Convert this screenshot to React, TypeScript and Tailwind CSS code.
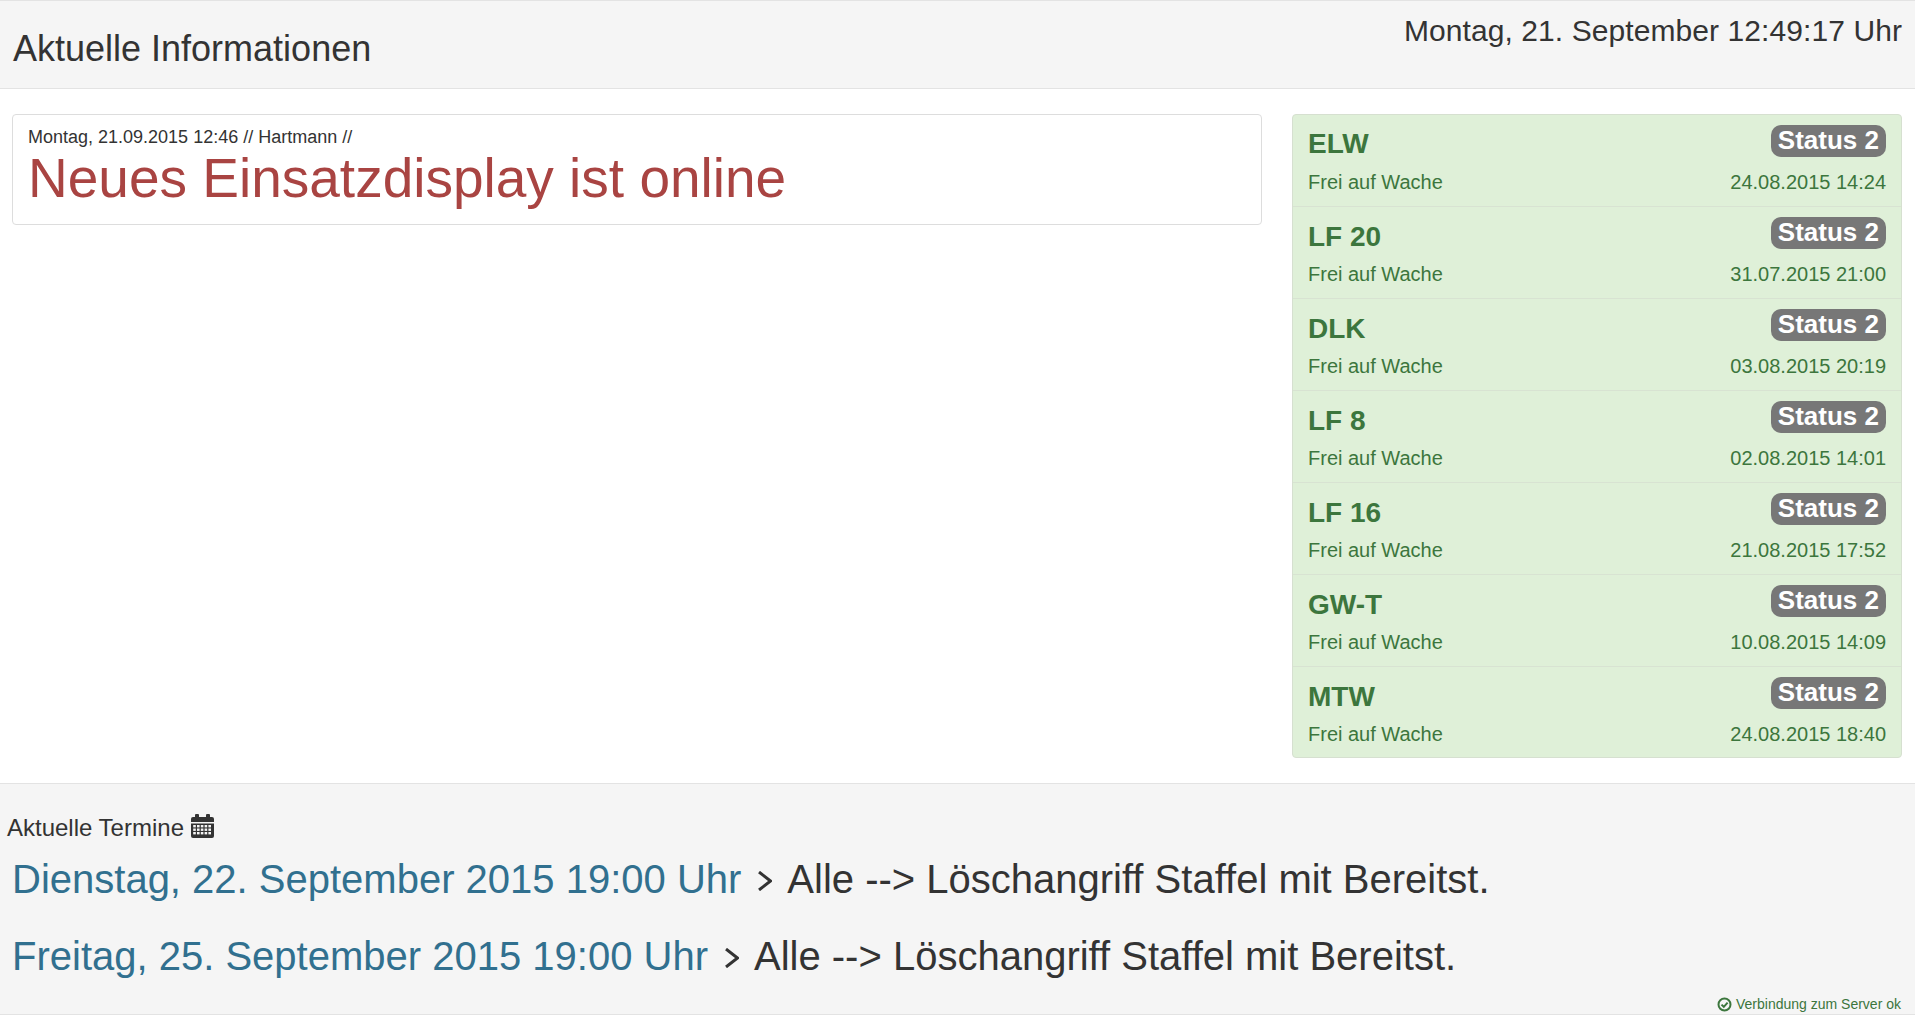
import React from "react";

const vehicles = [
  { name: "ELW", date: "24.08.2015 14:24" },
  { name: "LF 20", date: "31.07.2015 21:00" },
  { name: "DLK", date: "03.08.2015 20:19" },
  { name: "LF 8", date: "02.08.2015 14:01" },
  { name: "LF 16", date: "21.08.2015 17:52" },
  { name: "GW-T", date: "10.08.2015 14:09" },
  { name: "MTW", date: "24.08.2015 18:40" },
];

const termine = [
  { date: "Dienstag, 22. September 2015 19:00 Uhr", text: "Alle --> Löschangriff Staffel mit Bereitst." },
  { date: "Freitag, 25. September 2015 19:00 Uhr", text: "Alle --> Löschangriff Staffel mit Bereitst." },
];

const CalendarIcon: React.FC = () => (
  <svg viewBox="0 0 23 24" className="w-[23px] h-6 ml-px mb-[3px] fill-[#333]">
    <path d="M0 5a2 2 0 0 1 2-2h19a2 2 0 0 1 2 2v3H0z" />
    <rect x="4" y="0" width="4" height="4" rx="1" />
    <rect x="15" y="0" width="4" height="4" rx="1" />
    <path d="M0 9.5h23V22a2 2 0 0 1-2 2H2a2 2 0 0 1-2-2z" />
    <g fill="#f5f5f5">
      {[11, 14.5, 18].map((y) =>
        [2.2, 6, 9.8, 13.6, 17.4].map((x) => <rect key={`${x}-${y}`} x={x} y={y} width="2.6" height="2.4" />)
      )}
    </g>
  </svg>
);

const App: React.FC = () => {
  return (
    <div className="h-[1024px] bg-white text-[#333] font-['Liberation_Sans',Arial,sans-serif] overflow-hidden">
      {/* Header */}
      <div className="h-[89px] bg-[#f5f5f5] border-y border-[#e3e3e3] flex justify-between px-[13px]">
        <h1 className="text-[36px] leading-[40px] mt-[28px]">Aktuelle Informationen</h1>
        <div className="text-[30px] leading-[33px] mt-[13px] tracking-[0.08px]">Montag, 21. September 12:49:17 Uhr</div>
      </div>

      {/* Content */}
      <div className="h-[694px] flex items-start pt-[25px] pl-[12px]">
        <div className="w-[1250px] h-[111px] border border-[#ddd] rounded-[4px] px-[15px] pt-[11px]">
          <div className="text-[18px] leading-[22px]">Montag, 21.09.2015 12:46 // Hartmann //</div>
          <div className="text-[55px] leading-[60px] text-[#a94442]">Neues Einsatzdisplay ist online</div>
        </div>
        <div className="w-[610px] ml-[30px] rounded-[4px] border border-[#d6e0d0] bg-[#dff0d8] text-[#3c763d]">
          {vehicles.map((v, i) => (
            <div
              key={v.name}
              className={
                i === 0
                  ? "h-[91px] px-[15px] pt-[10px]"
                  : i === vehicles.length - 1
                    ? "h-[91px] px-[15px] pt-[10px] border-t border-[#d8e3d2]"
                    : "h-[92px] px-[15px] pt-[10px] border-t border-[#d8e3d2]"
              }
            >
              <div className="flex justify-between items-start h-[35px]">
                <span className={i === 0 ? "text-[28px] leading-[32px] font-bold mt-[3px]" : "text-[28px] leading-[32px] font-bold mt-[4px]"}>
                  {v.name}
                </span>
                <span className="h-8 rounded-[10px] bg-[#777] text-white text-[26px] leading-[30px] font-bold px-[7px]">Status 2</span>
              </div>
              <div className="flex justify-between text-[20px] leading-[24px] mt-[10px]">
                <span>Frei auf Wache</span>
                <span>{v.date}</span>
              </div>
            </div>
          ))}
        </div>
      </div>

      {/* Termine */}
      <div className="h-[232px] bg-[#f5f5f5] border-y border-[#e3e3e3] relative pl-[7px]">
        <div className="flex items-end gap-[6px] text-[24px] leading-[26px] mt-[30px]">
          Aktuelle Termine <CalendarIcon />
        </div>
        <div className="pl-[5px] mt-[16px]">
          {termine.map((t) => (
            <div key={t.date} className="text-[40px] leading-[44px] mb-[33px] flex items-center">
              <span className="text-[#31708f]">{t.date}</span>
              <svg viewBox="0 0 14 20" className="w-[14px] h-5 ml-[17px] mr-[15px] mt-[4px] fill-none stroke-[#333] stroke-[3]">
                <path d="M1 1 12.5 10 1 19" />
              </svg>
              <span>{t.text}</span>
            </div>
          ))}
        </div>
        <div className="absolute right-[14px] bottom-[1px] flex items-center gap-[4px] text-[14px] leading-[17px] text-[#3c763d]">
          <svg viewBox="0 0 15 15" className="w-[15px] h-[15px] fill-none stroke-[#3c763d] stroke-[2]">
            <circle cx="7.5" cy="7.5" r="6" />
            <path d="M4.5 7.6 6.8 9.8 10.6 5.6" />
          </svg>
          Verbindung zum Server ok
        </div>
      </div>
    </div>
  );
};

export default App;
